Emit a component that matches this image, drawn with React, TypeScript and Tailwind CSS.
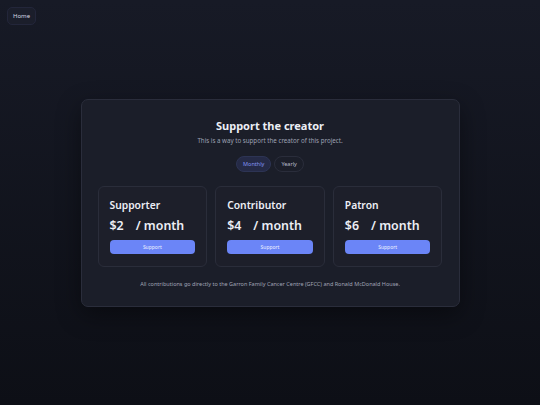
import React, { useState } from "react";

const tiers = [
  { id: "supporter", name: "Supporter", price: 2 },
  { id: "contributor", name: "Contributor", price: 4 },
  { id: "patron", name: "Patron", price: 6 },
];

const App = () => {
  const [period, setPeriod] = useState<"monthly" | "yearly">("monthly");

  return (
    <main
      className="relative flex min-h-screen w-full items-center justify-center bg-gradient-to-b from-[#171a26] to-[#0d0f16] text-white"
      style={{ fontFamily: '"Noto Sans", "Open Sans", sans-serif' }}
    >
      <button className="absolute left-[7px] top-[7px] rounded-[5px] border border-[#23263a] bg-[#1b1e2b] px-[5px] py-[4px] text-[6px] leading-[8px] text-[#d5d7e2]">
        Home
      </button>

      <section className="w-[379px] rounded-[7px] border border-[#2a2d3b] bg-[#1b1e29] px-[16px] pb-[18px] pt-[18px] shadow-[0_8px_24px_rgba(0,0,0,0.4)]">
        <h1 className="text-center text-[11px] font-bold leading-[15px] text-[#eceef5]">Support the creator</h1>
        <p className="mt-[3px] text-center text-[6.2px] leading-[9px] text-[#9da1b3]">
          This is a way to support the creator of this project.
        </p>

        <div className="mt-[11px] flex justify-center gap-[3px]">
          <button
            onClick={() => setPeriod("monthly")}
            className={
              period === "monthly"
                ? "rounded-full border border-[#2d3454] bg-[#252a46] px-[6px] py-[3px] text-[5.5px] leading-[8px] text-[#8294f2]"
                : "rounded-full border border-[#2a2d3b] bg-transparent px-[6px] py-[3px] text-[5.5px] leading-[8px] text-[#b9bcc9]"
            }
          >
            Monthly
          </button>
          <button
            onClick={() => setPeriod("yearly")}
            className={
              period === "yearly"
                ? "rounded-full border border-[#2d3454] bg-[#252a46] px-[6px] py-[3px] text-[5.5px] leading-[8px] text-[#8294f2]"
                : "rounded-full border border-[#2a2d3b] bg-transparent px-[6px] py-[3px] text-[5.5px] leading-[8px] text-[#b9bcc9]"
            }
          >
            Yearly
          </button>
        </div>

        <div className="mt-[14px] grid grid-cols-3 gap-[8px]">
          {tiers.map((tier) => (
            <div key={tier.id} className="flex flex-col rounded-[6px] border border-[#2a2d3a] bg-[#1d1f2a] px-[11px] pb-[12px] pt-[11px]">
              <h2 className="text-[10.3px] font-semibold leading-[14px] text-[#eceef5]">{tier.name}</h2>
              <div className="mt-[6px] flex items-baseline gap-[12px] text-[12.4px] font-semibold leading-[16px] text-[#eceef5]">
                <span>${period === "monthly" ? tier.price : tier.price * 12}</span>
                <span>/ {period === "monthly" ? "month" : "year"}</span>
              </div>
              <button className="mt-[6px] block h-[14px] w-full rounded-[4px] bg-[#6b85f7] text-[5px] leading-[14px] text-[#eef1ff]">
                Support
              </button>
            </div>
          ))}
        </div>

        <p className="mt-[13px] text-center text-[5.5px] leading-[8px] text-[#a0a4b5]">
          All contributions go directly to the Garron Family Cancer Centre (GFCC) and Ronald McDonald House.
        </p>
      </section>
    </main>
  );
};

export default App;
